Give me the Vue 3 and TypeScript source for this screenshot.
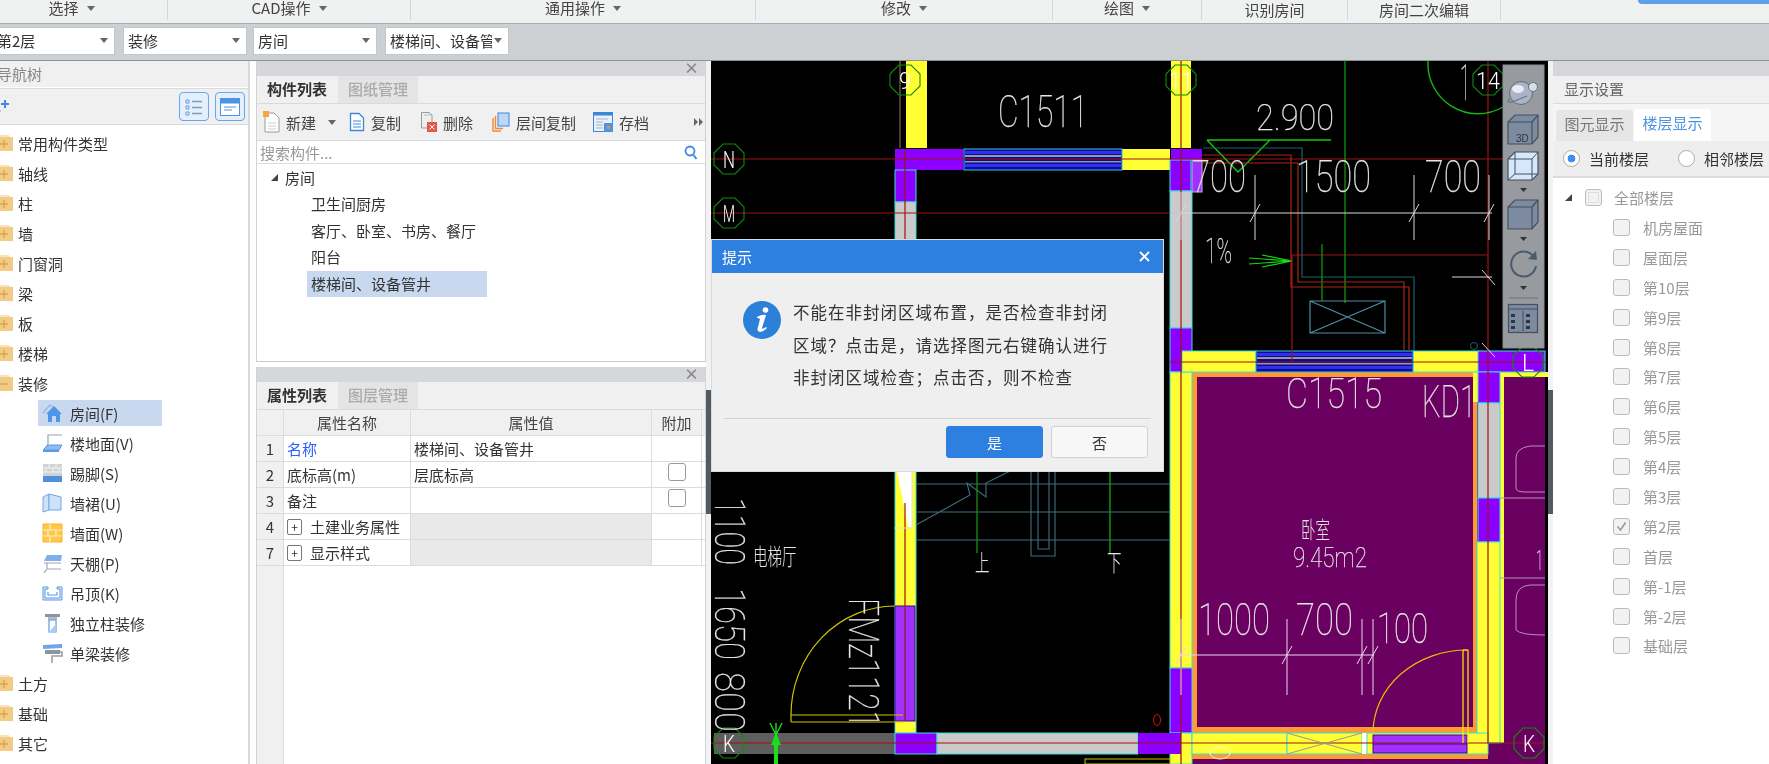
<script setup lang="ts">
interface Shape { d: string; f?: string; s?: string; w?: number }
interface Box { x: number; y: number; w: number; h: number; f: string; s?: string }
interface CadText { t: string; x: number; y: number; w: number; h: number; r?: boolean; c?: string }

const menus = [
  { label: '选择', w: 168, arrow: true, pad: 24 },
  { label: 'CAD操作', w: 243, arrow: true, pad: 0 },
  { label: '通用操作', w: 345, arrow: true, pad: 0 },
  { label: '修改', w: 297, arrow: true, pad: 0 },
  { label: '绘图', w: 149, arrow: true, pad: 0 },
  { label: '识别房间', w: 146, arrow: false, pad: 0 },
  { label: '房间二次编辑', w: 153, arrow: false, pad: 0 },
]
const selects = ['第2层', '装修', '房间', '楼梯间、设备管井']

const icons: Record<string, Shape[]> = {
  room: [
    { d: 'M1 10 L8 2 L11 4', s: '#8fbcf0', w: 1.4 },
    { d: 'M4 11 L12 3 L20 11 L18 11 L18 19 L14 19 L14 13 L10 13 L10 19 L6 19 L6 11 Z', f: '#4f96ea' },
  ],
  floor: [
    { d: 'M6 11 L6 2 L20 2', s: '#9aa3ad', w: 1.2 },
    { d: 'M6 11 L3 15', s: '#9aa3ad', w: 1 },
    { d: 'M6 12 L20 12 L17 17 L1 17 Z', f: '#8fbcf0', s: '#5b9be6', w: 1 },
    { d: 'M1 17 L17 17 L17 19 L1 19 Z', f: '#5b9be6' },
  ],
  skirt: [
    { d: 'M1 1 H20 V13 H1 Z', f: '#cfd2d6' },
    { d: 'M1 5 H20 M1 9 H20 M7 1 V5 M14 1 V5 M4 5 V9 M11 5 V9 M17 5 V9', s: '#f4f4f4', w: 1 },
    { d: 'M1 13 H20 V19 H1 Z', f: '#4f8fdc' },
  ],
  dado: [
    { d: 'M1 4 L7 1 L7 17 L1 19 Z', f: '#cfe1f7', s: '#6ea6ea', w: 1 },
    { d: 'M7 1 L19 4 L19 17 L7 17 Z', f: '#cfe1f7', s: '#6ea6ea', w: 1 },
  ],
  wall: [
    { d: 'M1 1 H20 V19 H1 Z', f: '#ffc848', s: '#f5b324', w: 1 },
    { d: 'M1 7 H20 M1 13 H20 M8 1 V7 M14 7 V13 M6 7 V13 M8 13 V19', s: '#fff0c8', w: 1.2 },
  ],
  ceil: [
    { d: 'M5 2 L20 2 L19 8 L2 8 Z', f: '#7fb0ee' },
    { d: 'M2 10 H19 M5 10 V16 H19 M5 16 L2 20', s: '#a0a8b0', w: 1.2 },
  ],
  drop: [
    { d: 'M1 4 H6 V6 H3 V15 H18 V6 H15 V4 H20 V17 H1 Z', f: '#dbe9fa', s: '#5b9be6', w: 1 },
    { d: 'M6 9 V12 H15 V9', s: '#5b9be6', w: 1.2 },
  ],
  pillar: [
    { d: 'M3 1 H18 V4 H3 Z', f: '#8d949b' },
    { d: 'M6 4 H15 V7 H6 Z', f: '#b6bbc0' },
    { d: 'M7 7 H14 V19 H7 Z', f: '#fff', s: '#5b9be6', w: 1.2 },
    { d: 'M7 19 L14 11 V19 Z', f: '#a9ccf4' },
  ],
  beam: [
    { d: 'M1 2 L20 1 L20 5 L1 6 Z', f: '#6ea6ea' },
    { d: 'M3 7 H18 V11 H3 Z', f: '#8d949b' },
    { d: 'M18 9 H20 V13 H10 V20', s: '#9aa0a6', w: 1.6 },
  ],
}

const topTree = ['常用构件类型', '轴线', '柱', '墙', '门窗洞', '梁', '板', '楼梯']
const subTree = [
  { label: '房间(F)', icon: 'room', active: true },
  { label: '楼地面(V)', icon: 'floor' },
  { label: '踢脚(S)', icon: 'skirt' },
  { label: '墙裙(U)', icon: 'dado' },
  { label: '墙面(W)', icon: 'wall' },
  { label: '天棚(P)', icon: 'ceil' },
  { label: '吊顶(K)', icon: 'drop' },
  { label: '独立柱装修', icon: 'pillar' },
  { label: '单梁装修', icon: 'beam' },
]
const endTree = ['土方', '基础', '其它']
const compChildren = ['卫生间厨房', '客厅、卧室、书房、餐厅', '阳台', '楼梯间、设备管井']
const props = [
  { n: '1', name: '名称', val: '楼梯间、设备管井', blue: true },
  { n: '2', name: '底标高(m)', val: '层底标高', check: true },
  { n: '3', name: '备注', val: '', check: true },
  { n: '4', name: '土建业务属性', val: '', group: true },
  { n: '7', name: '显示样式', val: '', group: true },
]
const floors = ['机房屋面', '屋面层', '第10层', '第9层', '第8层', '第7层', '第6层', '第5层', '第4层', '第3层', '第2层', '首层', '第-1层', '第-2层', '基础层']

const Y = '#ffff33', P = '#8c00ff', G = '#cacaca', C = '#35e0e0', O = '#ff9933', R = '#6a0060'
const boxes: Box[] = [
  { x: 1192, y: 372, w: 353, h: 392, f: R },
  { x: 1192, y: 372, w: 285, h: 361, f: O },
  { x: 1197, y: 377, w: 276, h: 350, f: R },
  { x: 1500, y: 372, w: 48, h: 5, f: Y },
  { x: 1500, y: 372, w: 4, h: 371, f: Y },
  { x: 1473, y: 372, w: 6, h: 30, f: Y },
  { x: 906, y: 61, w: 21, h: 87, f: Y },
  { x: 1171, y: 61, w: 20, h: 87, f: Y },
  { x: 895, y: 149, w: 68, h: 21, f: P },
  { x: 1122, y: 149, w: 48, h: 21, f: Y },
  { x: 1171, y: 149, w: 31, h: 11, f: P },
  { x: 1192, y: 160, w: 10, h: 32, f: '#a030ff', s: '#c8b0e8' },
  { x: 895, y: 170, w: 21, h: 32, f: P, s: C },
  { x: 895, y: 202, w: 21, h: 60, f: G, s: C },
  { x: 895, y: 465, w: 21, h: 268, f: Y, s: C },
  { x: 1170, y: 160, w: 21, h: 31, f: P, s: C },
  { x: 1170, y: 191, w: 22, h: 137, f: G, s: C },
  { x: 1170, y: 328, w: 22, h: 44, f: P, s: C },
  { x: 1170, y: 372, w: 22, h: 296, f: Y, s: C },
  { x: 1170, y: 668, w: 22, h: 65, f: P, s: C },
  { x: 1170, y: 733, w: 22, h: 31, f: Y, s: C },
  { x: 1182, y: 351, w: 74, h: 21, f: Y, s: C },
  { x: 1413, y: 351, w: 66, h: 21, f: Y, s: C },
  { x: 1478, y: 351, w: 67, h: 21, f: P, s: C },
  { x: 1478, y: 372, w: 22, h: 31, f: P, s: C },
  { x: 1478, y: 403, w: 22, h: 95, f: G, s: C },
  { x: 1478, y: 498, w: 22, h: 44, f: P, s: C },
  { x: 1477, y: 542, w: 23, h: 201, f: Y, s: C },
  { x: 714, y: 733, w: 181, h: 21, f: '#5e5e5e' },
  { x: 895, y: 733, w: 42, h: 21, f: P, s: C },
  { x: 937, y: 733, w: 201, h: 21, f: G, s: C },
  { x: 1138, y: 733, w: 43, h: 21, f: P },
  { x: 1192, y: 754, w: 296, h: 5, f: O },
  { x: 1192, y: 733, w: 95, h: 21, f: Y, s: C },
  { x: 1287, y: 733, w: 75, h: 21, f: Y, s: C },
  { x: 1362, y: 733, w: 5, h: 21, f: '#fff' },
  { x: 1367, y: 733, w: 121, h: 21, f: Y, s: C },
  { x: 1373, y: 735, w: 94, h: 18, f: '#a030ff', s: '#3a0a90' },
  { x: 895, y: 606, w: 20, h: 115, f: '#a030ff', s: '#3a0a90' },
  { x: 1085, y: 759, w: 85, h: 5, f: '#000', s: '#c9c900' },
]
const windows = [
  { x: 964, y: 149, w: 158, h: 21 },
  { x: 1256, y: 351, w: 157, h: 21 },
]
const lines: { d: string; s: string; w?: number }[] = [
  { d: 'M1373 744 H1467', s: '#3a0a90', w: 1.2 },
  { d: 'M900 61 V148', s: '#9c7a55' },
  { d: 'M711 159 H1503 M711 213 H1170 M711 743 H1545 M1170 362 H1545 M1292 255 H1488 M1292 255 V362 M1488 61 V743 M1181 61 V764 M905 149 V262 M905 503 V720', s: '#a01212', w: 1.2 },
  { d: 'M1207 140 H1331 M1207 140 L1238 172 L1270 140', s: '#11c911', w: 1.4 },
  { d: 'M1345 61 V303 M1322 244 V301 M977 471 V553', s: '#12b012', w: 1.1 },
  { d: 'M1110 471 V553', s: '#0d8a0d', w: 1.6 },
  { d: 'M1249 258 L1292 261 L1249 264 M1262 255 L1292 261 L1262 267', s: '#16d816', w: 1.2 },
  { d: 'M1428 61 A50 50 0 0 0 1503 107', s: '#14b814', w: 1.4 },
  { d: 'M1203 148 H1302 V277 H1414 V350', s: '#1c5f78', w: 1.2 },
  { d: 'M1203 155 H1291 V287 H1409 V350 M1203 163 H1298 V282 H1404 V350', s: '#a82a10', w: 1.2 },
  { d: 'M1310 301 H1385 V333 H1310 Z M1310 301 L1385 333 M1385 301 L1310 333', s: '#4c90a8', w: 1.2 },
  { d: 'M916 484 H1170 M916 512 H1170 M916 540 H1170 M1031 471 V556 H1055 V471 M1038 471 V549 H1049 V471 M916 525 L970 495 L967 483 L986 497 L986 483 L1010 471', s: '#3f6f80', w: 1.1 },
  { d: 'M1181 213 H1492 M1255 175 V240 M1414 175 V240 M1489 175 V240 M1176 222 L1186 204 M1250 222 L1260 204 M1409 222 L1419 204 M1484 222 L1494 204 M1452 277 H1492 M1482 270 L1495 285 M1482 343 L1495 357 M1181 192 V240', s: '#d8d8d8', w: 1 },
  { d: 'M1179 655 H1374 M1181 619 V695 M1287 619 V695 M1362 619 V695 M1373 619 V695 M1176 664 L1186 646 M1282 664 L1292 646 M1357 664 L1367 646 M1368 664 L1378 646', s: '#e8d8e8', w: 1 },
  { d: 'M791 715 A104 109 0 0 1 895 606 M791 715 H903 M791 722 H903 M791 715 V722', s: '#cfc400', w: 1.2 },
  { d: 'M1373 733 A94 83 0 0 1 1467 650', s: '#e8c000', w: 1.2 },
  { d: 'M1463 650 H1468 V743 M1463 650 V743', s: '#ffee00', w: 1.2 },
  { d: 'M1287 733 L1362 754 M1362 733 L1287 754', s: '#999', w: 1 },
  { d: 'M776 723 V764 M770 723 L776 735 L782 723', s: '#18e018', w: 1.4 },
  { d: 'M1516 458 V488 Q1516 492 1525 492 H1545 M1516 458 Q1516 448 1530 446 H1545 M1516 600 V630 Q1520 635 1545 635 M1516 600 Q1516 586 1530 585 H1545 M1500 498 H1545 M1500 578 H1545', s: '#b792b8', w: 1 },
  { d: 'M894.5 471 H912 V528 H894.5', s: '#ddd', w: 1 },
]
const rings = [
  { x: 905, y: 80, t: '9' }, { x: 1181, y: 80, t: '11' }, { x: 1488, y: 80, t: '14' },
  { x: 729, y: 159, t: 'N' }, { x: 729, y: 213, t: 'M' }, { x: 1528, y: 362, t: 'L' },
  { x: 729, y: 743, t: 'K' }, { x: 1529, y: 743, t: 'K' },
]
const cadTexts: CadText[] = [
  { t: 'C1511', x: 998, y: 127, w: 90, h: 32 },
  { t: '2.900', x: 1256, y: 130, w: 78, h: 27 },
  { t: '700', x: 1192, y: 192, w: 54, h: 32 },
  { t: '1500', x: 1296, y: 192, w: 75, h: 32 },
  { t: '700', x: 1425, y: 192, w: 56, h: 32 },
  { t: '1%', x: 1205, y: 263, w: 27, h: 25 },
  { t: '1', x: 1460, y: 100, w: 10, h: 36 },
  { t: 'C1515', x: 1286, y: 408, w: 96, h: 31 },
  { t: 'KD1', x: 1422, y: 417, w: 54, h: 32 },
  { t: '9.45m2', x: 1293, y: 567, w: 74, h: 20 },
  { t: '1000', x: 1198, y: 635, w: 72, h: 32 },
  { t: '700', x: 1296, y: 635, w: 57, h: 32 },
  { t: '100', x: 1377, y: 643, w: 51, h: 31 },
  { t: '1', x: 1536, y: 570, w: 7, h: 20 },
  { t: '1100', x: 715, y: 498, w: 67, h: 31, r: true },
  { t: '1650', x: 715, y: 588, w: 72, h: 31, r: true },
  { t: '800', x: 715, y: 672, w: 60, h: 31, r: true },
  { t: 'FMz1121', x: 849, y: 598, w: 130, h: 31, r: true },
]
const plain = [
  { t: '卧室', x: 1301, y: 538 },
  { t: '电梯厅', x: 753, y: 565 },
  { t: '上', x: 975, y: 571 },
  { t: '下', x: 1107, y: 571 },
]
const dialogLines = ['不能在非封闭区域布置，是否检查非封闭', '区域？点击是，请选择图元右键确认进行', '非封闭区域检查；点击否，则不检查']
</script>

<template>
  <div class="root">
    <div class="menubar">
      <div v-for="m in menus" :key="m.label" class="menu" :class="{ low: !m.arrow }" :style="{ width: m.w + 'px', paddingRight: m.pad + 'px' }">
        <span>{{ m.label }}</span><i v-if="m.arrow" class="caret"></i>
      </div>
      <div class="menu-flag"></div>
    </div>
    <div class="selectbar">
      <div v-for="s in selects" :key="s" class="select"><span>{{ s }}</span><i class="caret"></i></div>
    </div>
    <div class="main">
      <aside class="nav">
        <div class="nav-head">导航树</div>
        <div class="nav-tools">
          <svg class="spark" width="14" height="16" viewBox="0 0 14 16"><path d="M8 1 V9 M4 5 H12" stroke="#3d8ae0" stroke-width="2"/><path d="M0 9 L4 12 L0 15 Z" fill="#3d8ae0"/></svg>
          <button class="nav-btn">
            <svg width="20" height="20" viewBox="0 0 20 20"><path d="M2 3 h3 v3 h-3 z M2 9 h3 v3 h-3 z M2 15 h3 v3 h-3 z" fill="none" stroke="#5a9fe8"/><path d="M8 4.5 H18 M8 10.5 H18 M8 16.5 H18" stroke="#7a9cc4" stroke-width="1.4"/></svg>
          </button>
          <button class="nav-btn">
            <svg width="22" height="20" viewBox="0 0 22 20"><rect x="1.5" y="1.5" width="19" height="17" fill="#fff" stroke="#4d94e4"/><rect x="1.5" y="1.5" width="19" height="5" fill="#4d94e4"/><path d="M5 10 H17 M5 13 H13" stroke="#4d94e4"/></svg>
          </button>
        </div>
        <div class="tree">
          <div v-for="t in topTree" :key="t" class="tree-row">
            <svg class="folder" width="13" height="18" viewBox="0 0 13 18"><path d="M0 1 H8 L10 3 H13 V17 H0 Z" fill="#f2cb86"/><path d="M0 1 H8 L10 3 H0 Z" fill="#f9e3b8"/><path d="M0 10 H8 M4 6 V14" stroke="#d9a54a" stroke-width="1.4"/></svg>
            <span>{{ t }}</span>
          </div>
          <div class="tree-row">
            <svg class="folder" width="13" height="18" viewBox="0 0 13 18"><path d="M0 1 H8 L10 3 H13 V17 H0 Z" fill="#f2cb86"/><path d="M0 1 H8 L10 3 H0 Z" fill="#f9e3b8"/><path d="M0 10 H8" stroke="#d9a54a" stroke-width="1.4"/></svg>
            <span>装修</span>
          </div>
          <div v-for="s in subTree" :key="s.label" class="sub-row" :class="{ on: s.active }">
            <svg width="21" height="20" viewBox="0 0 21 20"><path v-for="(p, i) in icons[s.icon]" :key="i" :d="p.d" :fill="p.f || 'none'" :stroke="p.s || 'none'" :stroke-width="p.w || 0"/></svg>
            <span>{{ s.label }}</span>
          </div>
          <div v-for="t in endTree" :key="t" class="tree-row">
            <svg class="folder" width="13" height="18" viewBox="0 0 13 18"><path d="M0 1 H8 L10 3 H13 V17 H0 Z" fill="#f2cb86"/><path d="M0 1 H8 L10 3 H0 Z" fill="#f9e3b8"/><path d="M0 10 H8 M4 6 V14" stroke="#d9a54a" stroke-width="1.4"/></svg>
            <span>{{ t }}</span>
          </div>
        </div>
      </aside>

      <section class="mid">
        <div class="panel comp">
          <div class="strip"><span class="x">×</span></div>
          <div class="tabs"><div class="tab on">构件列表</div><div class="tab">图纸管理</div></div>
          <div class="tools">
            <span class="tool t-new">
              <svg width="17" height="22" viewBox="0 0 17 22"><path d="M2 2 H11 L16 7 V21 H2 Z" fill="#fdfdfd" stroke="#9a9a9a"/><path d="M5 12 H13 M5 15 H13 M5 18 H13" stroke="#cfcfcf"/><rect x="0" y="0" width="6" height="6" fill="#f5a93a"/></svg>新建<i class="caret"></i>
            </span>
            <span class="tool t-copy">
              <svg width="16" height="20" viewBox="0 0 16 20"><path d="M1.5 1.5 H10 L14.5 6 V18.5 H1.5 Z" fill="#fff" stroke="#3d86d8" stroke-width="1.3"/><path d="M4 9 H12 M4 12 H12 M4 15 H12" stroke="#3d86d8"/></svg>复制
            </span>
            <span class="tool t-del">
              <svg width="17" height="22" viewBox="0 0 17 22"><path d="M1.5 1.5 H9 L12 4 V17 H1.5 Z" fill="#eee" stroke="#9a9a9a"/><path d="M4 4 H11" stroke="#bbb"/><rect x="7" y="11" width="10" height="10" fill="#e2574c"/><path d="M9.5 13.5 L14.5 18.5 M14.5 13.5 L9.5 18.5" stroke="#fff"/></svg>删除
            </span>
            <span class="tool t-layer">
              <svg width="18" height="20" viewBox="0 0 18 20"><path d="M1 6 V19 H9" fill="none" stroke="#f08a3c" stroke-width="1.4"/><path d="M3.5 4 V16.5 H11" fill="none" stroke="#f08a3c" stroke-width="1.4"/><rect x="6" y="1" width="11" height="13" fill="#bcd7f7" stroke="#3d86d8"/></svg>层间复制
            </span>
            <span class="tool t-save">
              <svg width="20" height="20" viewBox="0 0 20 20"><rect x="0.5" y="0.5" width="19" height="19" fill="#e8f0fa" stroke="#3d86d8"/><rect x="0.5" y="0.5" width="19" height="3" fill="#3d86d8"/><path d="M3 7 H15 M3 10 H10 M3 13 H10 M3 16 H10" stroke="#a8b4c2"/><rect x="11" y="11" width="9" height="9" fill="#4d94e4"/><rect x="14" y="14" width="3" height="3" fill="#f08a3c"/></svg>存档
            </span>
            <svg class="more" width="9" height="8" viewBox="0 0 9 8"><path d="M0 0 L4 4 L0 8 Z M5 0 L9 4 L5 8 Z" fill="#666"/></svg>
          </div>
          <div class="search">
            <span>搜索构件...</span>
            <svg width="14" height="15" viewBox="0 0 14 15"><circle cx="6" cy="6" r="4.5" fill="none" stroke="#3d8ae0" stroke-width="1.8"/><path d="M9.5 10 L12.5 14" stroke="#3d8ae0" stroke-width="2"/></svg>
          </div>
          <div class="comp-tree">
            <div class="comp-root"><i class="tri"></i>房间</div>
            <div v-for="(c, i) in compChildren" :key="c" class="comp-child" :class="{ on: i === 3 }">{{ c }}</div>
          </div>
        </div>

        <div class="panel attr">
          <div class="strip"><span class="x">×</span></div>
          <div class="tabs"><div class="tab on">属性列表</div><div class="tab">图层管理</div></div>
          <div class="table">
            <div class="rowh">
              <div class="c0"></div><div class="c1 ctr">属性名称</div><div class="c2 ctr">属性值</div><div class="c3 ctr">附加</div>
            </div>
            <div v-for="p in props" :key="p.n" class="row">
              <div class="c0 num">{{ p.n }}</div>
              <div class="c1 cell" :class="{ blue: p.blue }">
                <i v-if="p.group" class="plus">+</i>{{ p.name }}
              </div>
              <div class="c2 cell" :class="{ shade: p.group }">{{ p.val }}</div>
              <div class="c3 cell center"><i v-if="p.check" class="chk"></i></div>
            </div>
            <div class="table-rest"></div>
          </div>
        </div>
      </section>

      <div class="split"><i></i></div>

      <div class="canvas">
        <svg class="cad" width="837" height="703" viewBox="711 61 837 703">
          <rect x="711" y="61" width="837" height="703" fill="#000"/>
          <rect v-for="(b, i) in boxes" :key="'b' + i" :x="b.x" :y="b.y" :width="b.w" :height="b.h" :fill="b.f" :stroke="b.s || 'none'" stroke-width="1"/>
          <polygon points="897,471 912,471 912,527 908,527" fill="#fff"/>
          <g v-for="(w, i) in windows" :key="'w' + i">
            <rect :x="w.x" :y="w.y" :width="w.w" :height="w.h" fill="#0a0a9c" stroke="#35c8d8"/>
            <rect :x="w.x + 1" :y="w.y + 2" :width="w.w - 2" height="3" fill="#3030f0"/>
            <rect :x="w.x + 1" :y="w.y + 6" :width="w.w - 2" height="2" fill="#9a9a8a"/>
            <rect :x="w.x + 1" :y="w.y + 12" :width="w.w - 2" height="1.5" fill="#9a9a8a"/>
            <rect :x="w.x + 1" :y="w.y + 15" :width="w.w - 2" height="3" fill="#3030f0"/>
          </g>
          <path v-for="(l, i) in lines" :key="'l' + i" :d="l.d" fill="none" :stroke="l.s" :stroke-width="l.w || 1"/>
          <ellipse cx="1157" cy="720" rx="3.5" ry="5.5" fill="none" stroke="#e01010"/>
          <ellipse cx="1220" cy="753" rx="10" ry="6" fill="none" stroke="#f8f4e0"/>
          <circle cx="1474" cy="346" r="3.5" fill="none" stroke="#1c5f78"/>
          <path d="M771 745 L776 732 L781 745 H778 V764 H774 V745 Z" fill="#18e018"/>
          <g v-for="r in rings" :key="r.t + r.x + r.y">
            <polygon :points="`${r.x - 15},${r.y - 6} ${r.x - 6},${r.y - 15} ${r.x + 6},${r.y - 15} ${r.x + 15},${r.y - 6} ${r.x + 15},${r.y + 6} ${r.x + 6},${r.y + 15} ${r.x - 6},${r.y + 15} ${r.x - 15},${r.y + 6}`" fill="none" stroke="#108a10" stroke-width="1.1"/>
            <text :x="r.x" :y="r.y + 9" :textLength="r.t.length * 12" lengthAdjust="spacingAndGlyphs" text-anchor="middle" font-size="24" class="ring-t">{{ r.t }}</text>
          </g>
          <template v-for="c in cadTexts" :key="c.t + c.x + c.y">
            <text v-if="!c.r" :x="c.x" :y="c.y" :font-size="c.h / 0.72" :textLength="c.w" lengthAdjust="spacingAndGlyphs" class="cad-t">{{ c.t }}</text>
            <text v-else :transform="`translate(${c.x},${c.y}) rotate(90)`" :font-size="c.h / 0.72" :textLength="c.w" lengthAdjust="spacingAndGlyphs" class="cad-t">{{ c.t }}</text>
          </template>
          <text v-for="p in plain" :key="p.t" :transform="`translate(${p.x},${p.y}) scale(1,1.6)`" font-size="14.5" class="cad-cn">{{ p.t }}</text>

          <g class="view-tools">
            <rect x="1503" y="65" width="41" height="283" fill="#979a9f" stroke="#8a8d92"/>
            <circle cx="1521" cy="93" r="11.5" fill="#aab4c6" stroke="#5f6a7a"/>
            <ellipse cx="1518" cy="89" rx="6" ry="4" fill="#e9edf3"/>
            <circle cx="1533" cy="87" r="4.5" fill="#d8dee8" stroke="#69737f"/>
            <path d="M1510 98 Q1505 103 1512 102 L1527 96" fill="none" stroke="#5f6a7a"/>

            <path d="M1508 122 L1515 115 H1538 V137 L1532 144 H1508 Z" fill="#7c8ba0" stroke="#43505f" stroke-width="1.2"/>
            <path d="M1508 122 H1532 V144 M1532 122 L1538 115" fill="none" stroke="#43505f" stroke-width="1.2"/>
            <text x="1516" y="142" class="t3d">3D</text>

            <path d="M1508 159 L1515 152 H1538 V174 L1532 180 H1508 Z" fill="#d6e6fb" stroke="#43505f" stroke-width="1.2"/>
            <path d="M1508 159 H1532 V180 M1532 159 L1538 152 M1515 152 V174 H1538 M1515 174 L1508 180" fill="none" stroke="#43505f"/>
            <path d="M1520 188 H1527 L1523.5 192 Z" fill="#333"/>

            <path d="M1508 207 L1515 200 H1538 V222 L1532 229 H1508 Z" fill="#7c8ba0" stroke="#43505f" stroke-width="1.2"/>
            <path d="M1508 207 H1532 V229 M1532 207 L1538 200" fill="none" stroke="#43505f" stroke-width="1.2"/>
            <path d="M1520 237 H1527 L1523.5 241 Z" fill="#333"/>

            <path d="M1534 257 A12.5 12.5 0 1 0 1536 266" fill="none" stroke="#4d5a6a" stroke-width="2"/>
            <path d="M1528 259 L1537 260 L1536 251 Z" fill="#4d5a6a"/>
            <path d="M1520 286 H1527 L1523.5 290 Z" fill="#333"/>

            <path d="M1509 298 H1538" stroke="#777a7f" stroke-width="1.2"/>
            <rect x="1508.5" y="304.5" width="29" height="28" fill="#7c8ba0" stroke="#43505f" stroke-width="1.2"/>
            <path d="M1523 311 V331 M1509 309 H1537" stroke="#43505f" fill="none"/>
            <path d="M1511 314 h4 v3 h-4 z M1511 320 h4 v3 h-4 z M1511 326 h4 v3 h-4 z M1526 314 h4 v3 h-4 z M1526 320 h4 v3 h-4 z M1526 326 h4 v3 h-4 z" fill="#2d3642"/>
          </g>
        </svg>
      </div>

      <div class="split right"><i></i></div>

      <aside class="rightp">
        <div class="strip"></div>
        <div class="r-head">显示设置</div>
        <div class="r-tabs"><div class="r-tab">图元显示</div><div class="r-tab on">楼层显示</div></div>
        <div class="radios">
          <span class="radio on"><i></i>当前楼层</span>
          <span class="radio"><i></i>相邻楼层</span>
        </div>
        <div class="floors">
          <div class="f-root"><i class="tri"></i><i class="box mixed"></i><span>全部楼层</span></div>
          <div v-for="f in floors" :key="f" class="f-row">
            <i class="box" :class="{ checked: f === '第2层' }"><svg v-if="f === '第2层'" width="13" height="13" viewBox="0 0 13 13"><path d="M2.5 6.5 L5.5 10 L10.5 2.5" fill="none" stroke="#9a9a9a" stroke-width="1.6"/></svg></i>
            <span>{{ f }}</span>
          </div>
        </div>
      </aside>
    </div>

    <div class="dialog">
      <div class="d-title"><span>提示</span><svg width="11" height="11" viewBox="0 0 11 11"><path d="M1 1 L10 10 M10 1 L1 10" stroke="#fff" stroke-width="1.8"/></svg></div>
      <div class="d-body">
        <svg class="d-icon" width="38" height="38" viewBox="0 0 38 38"><circle cx="19" cy="19" r="19" fill="#2d80d8"/><path d="M14 16 Q19 13 23 14 L19 27 Q19 29 23 26 L24 27 Q18 33 15 30 Q14 29 15 26 L17 18 Q16 17 14 17 Z" fill="#fff"/><circle cx="22.5" cy="9" r="2.8" fill="#fff"/></svg>
        <div class="d-text"><div v-for="l in dialogLines" :key="l">{{ l }}</div></div>
      </div>
      <div class="d-sep"></div>
      <div class="d-foot"><button class="yes">是</button><button class="no">否</button></div>
    </div>
  </div>
</template>

<style>
html, body { margin: 0; overflow: hidden; background: #fff; }
</style>

<style scoped>
.root { position: relative; width: 1769px; height: 764px; overflow: hidden; font-family: "Noto Sans CJK SC", "Liberation Sans", sans-serif; font-size: 15px; color: #333; background: #fff; filter: blur(0.35px); }
i { font-style: normal; display: inline-block; }
.menubar { display: flex; height: 23px; background: #f0f1f1; border-bottom: 1px solid #a9abae; position: relative; }
.menu { flex: none; box-sizing: border-box; height: 20px; display: flex; align-items: center; justify-content: center; gap: 8px; border-right: 1px solid #d4d6d8; line-height: 16px; color: #444; padding-bottom: 4px; }
.menu.low { padding-bottom: 0; }
.caret { width: 0; height: 0; border: 4px solid transparent; border-top: 5px solid #666; border-bottom: 0; }
.menu-flag { position: absolute; left: 1638px; top: 0; width: 131px; height: 4px; background: #5ba0e8; border-bottom-left-radius: 4px; }
.selectbar { height: 37px; box-sizing: border-box; background: #cdd0d3; border-bottom: 1px solid #8e9194; display: flex; align-items: center; padding-left: 0; margin-left: -8px; width: 1777px; gap: 6px; padding-bottom: 3px; }
.select { flex: none; width: 124px; height: 28px; box-sizing: border-box; background: #fff; border: 1px solid #c4c6c9; display: flex; align-items: center; justify-content: space-between; padding: 0 6px 0 4px; overflow: hidden; white-space: nowrap; color: #333; }
.select:first-child { width: 123px; margin-right: 2px; }
.select:nth-child(3) { margin-right: 2px; }
.select span { overflow: hidden; flex: 1; }
.select .caret { flex: none; margin-left: 2px; }
.main { display: flex; height: 703px; }
.nav { flex: none; width: 250px; box-sizing: border-box; border-right: 2px solid #d8dadc; display: flex; flex-direction: column; margin-right: 6px; }
.nav-head { height: 26px; background: #f0f0f0; color: #888; line-height: 26px; margin-left: -3px; padding-left: 0; }
.nav-tools { height: 37px; margin-top: 1px; background: #f0f0f0; border-bottom: 1px solid #d8dadc; border-top: 1px solid #d8dadc; box-sizing: border-box; display: flex; align-items: center; padding-right: 3px; }
.spark { margin-right: auto; margin-left: -3px; }
.nav-btn { width: 30px; height: 29px; padding: 0; margin-left: 6px; border: 1px solid #63a8f0; border-radius: 4px; background: #e4effb; display: flex; align-items: center; justify-content: center; }
.tree { padding-top: 3px; }
.tree-row { height: 30px; display: flex; align-items: center; }
.folder { flex: none; margin-right: 5px; }
.sub-row { height: 30px; display: flex; align-items: center; width: 124px; box-sizing: border-box; margin-left: 38px; padding-left: 5px; gap: 7px; color: #333; white-space: nowrap; }
.sub-row svg { flex: none; margin-left: -1px; }
.sub-row.on { background: #c7d8ef; height: 26px; margin-top: 2px; margin-bottom: 2px; }
.mid { flex: none; width: 450px; display: flex; flex-direction: column; }
.panel { display: flex; flex-direction: column; border-left: 1px solid #d0d2d4; border-right: 1px solid #d0d2d4; box-sizing: border-box; }
.comp { height: 301px; border-bottom: 1px solid #c8cacc; }
.attr { height: 397px; margin-top: 5px; }
.strip { height: 15px; flex: none; background: #d5d7da; position: relative; }
.x { position: absolute; right: 6px; top: -2px; color: #888; font-size: 15px; line-height: 18px; font-weight: 700; }
.tabs { height: 27px; flex: none; display: flex; background: #f0f0f0; border-bottom: 1px solid #d8dadc; }
.tab { width: 80px; text-align: center; line-height: 26px; background: #e4e4e4; color: #aaa; font-weight: 500; margin-right: 1px; }
.tab.on { background: #f0f0f0; color: #333; font-weight: 700; }
.tools { height: 37px; flex: none; background: #f0f0f0; border-bottom: 1px solid #dcdcdc; box-sizing: border-box; position: relative; }
.tool { position: absolute; top: 0; height: 36px; display: flex; align-items: center; gap: 6px; white-space: nowrap; color: #444; }
.tool .caret { margin-left: 6px; }
.t-new { left: 6px; }
.t-copy { left: 92px; }
.t-del { left: 163px; }
.t-layer { left: 235px; }
.t-save { left: 336px; }
.more { position: absolute; right: 2px; top: 14px; }
.search { height: 23px; flex: none; box-sizing: border-box; display: flex; align-items: center; justify-content: space-between; padding: 0 7px 0 3px; border-bottom: 1px solid #dcdcdc; color: #999; font-size: 15px; }
.comp-tree { flex: 1; background: #fff; }
.comp-root { height: 27px; display: flex; align-items: center; padding-left: 14px; gap: 7px; }
.tri { width: 0; height: 0; border-left: 7px solid transparent; border-bottom: 7px solid #444; flex: none; }
.comp-child { height: 26.5px; line-height: 26px; margin-left: 50px; padding-left: 4px; width: 176px; white-space: nowrap; }
.comp-child.on { background: #c7d8ef; }
.table { flex: 1; display: flex; flex-direction: column; }
.rowh, .row { display: flex; height: 26px; flex: none; }
.rowh { background: #f0f0f0; border-bottom: 1px solid #dcdcdc; box-sizing: border-box; }
.row { border-bottom: 1px solid #dcdcdc; box-sizing: border-box; }
.c0 { width: 27px; flex: none; background: #f0f0f0; border-right: 1px solid #dcdcdc; box-sizing: border-box; }
.c1 { width: 127px; flex: none; border-right: 1px solid #dcdcdc; box-sizing: border-box; }
.c2 { width: 241px; flex: none; border-right: 1px solid #dcdcdc; box-sizing: border-box; }
.c3 { width: 50px; flex: none; border-right: 1px solid #dcdcdc; box-sizing: border-box; }
.ctr { text-align: center; line-height: 25px; color: #444; }
.num { text-align: center; line-height: 25px; }
.cell { line-height: 25px; padding-left: 3px; white-space: nowrap; display: flex; align-items: center; }
.cell.blue { color: #2a5cff; }
.cell.shade { background: #e9e9e9; }
.cell.center { justify-content: center; padding: 0; }
.plus { width: 13px; height: 14px; line-height: 13px; border: 1px solid #777; border-radius: 2px; text-align: center; font-size: 12px; margin-right: 8px; flex: none; box-sizing: content-box; }
.chk { width: 16px; height: 16px; border: 1px solid #999; border-radius: 3px; background: #fff; margin-top: -6px; }
.table-rest { flex: 1; width: 27px; background: #f0f0f0; border-right: 1px solid #dcdcdc; box-sizing: border-box; }
.split { flex: none; width: 5px; background: #f2f2f2; position: relative; }
.split i { position: absolute; left: 0; top: 329px; width: 5px; height: 124px; background: #555a60; }
.canvas { flex: none; width: 837px; height: 703px; background: #000; }
.cad { display: block; }
.cad-t { font-family: "Roboto", "Liberation Sans", sans-serif; font-weight: 100; fill: #e6e6e6; stroke: #e6e6e6; stroke-width: 0.25; }
.ring-t { font-family: "Roboto", "Liberation Sans", sans-serif; font-weight: 300; fill: #fff; }
.cad-cn { font-family: "Noto Sans CJK SC", sans-serif; font-weight: 300; fill: #e6e6e6; }
.t3d { font-family: "Liberation Sans", sans-serif; font-size: 10px; fill: #2d3642; }
.rightp { flex: none; width: 216px; display: flex; flex-direction: column; background: #fff; white-space: nowrap; overflow: hidden; }
.r-head { height: 28px; line-height: 26px; padding-left: 11px; background: #f0f0f0; color: #666; border-bottom: 1px solid #d8dadc; box-sizing: border-box; flex: none; }
.r-tabs { height: 37px; flex: none; display: flex; align-items: flex-end; padding-left: 3px; background: #f5f5f5; box-sizing: border-box; gap: 1px; }
.r-tab { width: 77px; height: 31px; line-height: 28px; text-align: center; background: #e6e6e6; color: #777; border-radius: 3px 3px 0 0; }
.r-tab.on { background: #fff; color: #4d94e4; height: 32px; }
.radios { height: 37px; flex: none; display: flex; align-items: center; background: #eee; border-bottom: 2px solid #dcdcdc; box-sizing: border-box; padding-left: 10px; }
.radio { display: flex; align-items: center; gap: 9px; width: 115px; color: #333; flex: none; }
.radio i { width: 17px; height: 17px; box-sizing: border-box; border-radius: 50%; border: 1px solid #aaa; background: #fff; flex: none; }
.radio.on i { border: 1px solid #aaa; background: radial-gradient(circle, #3d8ff0 0 3.6px, #fff 4.2px); }
.floors { padding-top: 4.5px; color: #999; }
.f-root { height: 30px; display: flex; align-items: center; padding-left: 12px; }
.f-root .tri { margin-right: 13px; }
.f-root span { margin-left: 12px; }
.box { width: 17px; height: 17px; box-sizing: border-box; border: 1px solid #bbb; border-radius: 3px; background: #f2f2f2; display: flex; align-items: center; justify-content: center; flex: none; }
.box.mixed { box-shadow: inset 0 0 0 2px #f2f2f2, inset 0 0 0 3px #ddd; }
.f-row { height: 29.9px; display: flex; align-items: center; padding-left: 60px; gap: 13px; }
.dialog { position: absolute; left: 712px; top: 240px; width: 451px; height: 231px; background: #efefef; display: flex; flex-direction: column; box-shadow: 0 0 0 1px #d6dbe2; }
.d-title { height: 33px; flex: none; background: #2d80e0; color: #fff; display: flex; align-items: center; justify-content: space-between; padding: 0 13px 0 10px; }
.d-body { height: 145px; flex: none; display: flex; padding: 28px 0 0 31px; box-sizing: border-box; }
.d-icon { flex: none; margin-top: 0; }
.d-text { margin-left: 12px; margin-top: -5px; font-size: 16.5px; letter-spacing: 1px; line-height: 32.5px; color: #333; white-space: nowrap; }
.d-sep { height: 1px; flex: none; margin: 0 12px; background: #d2d2d2; }
.d-foot { flex: 1; display: flex; justify-content: flex-end; padding: 7px 15px 0 0; gap: 8px; align-items: flex-start; }
button { font-family: inherit; font-size: 15px; cursor: default; }
.yes, .no { width: 97px; height: 32px; border-radius: 3px; padding: 0; }
.yes { background: #2d80e0; color: #fff; border: 1px solid #2d80e0; }
.no { background: #f7f7f7; color: #333; border: 1px solid #ccd3de; }
</style>
